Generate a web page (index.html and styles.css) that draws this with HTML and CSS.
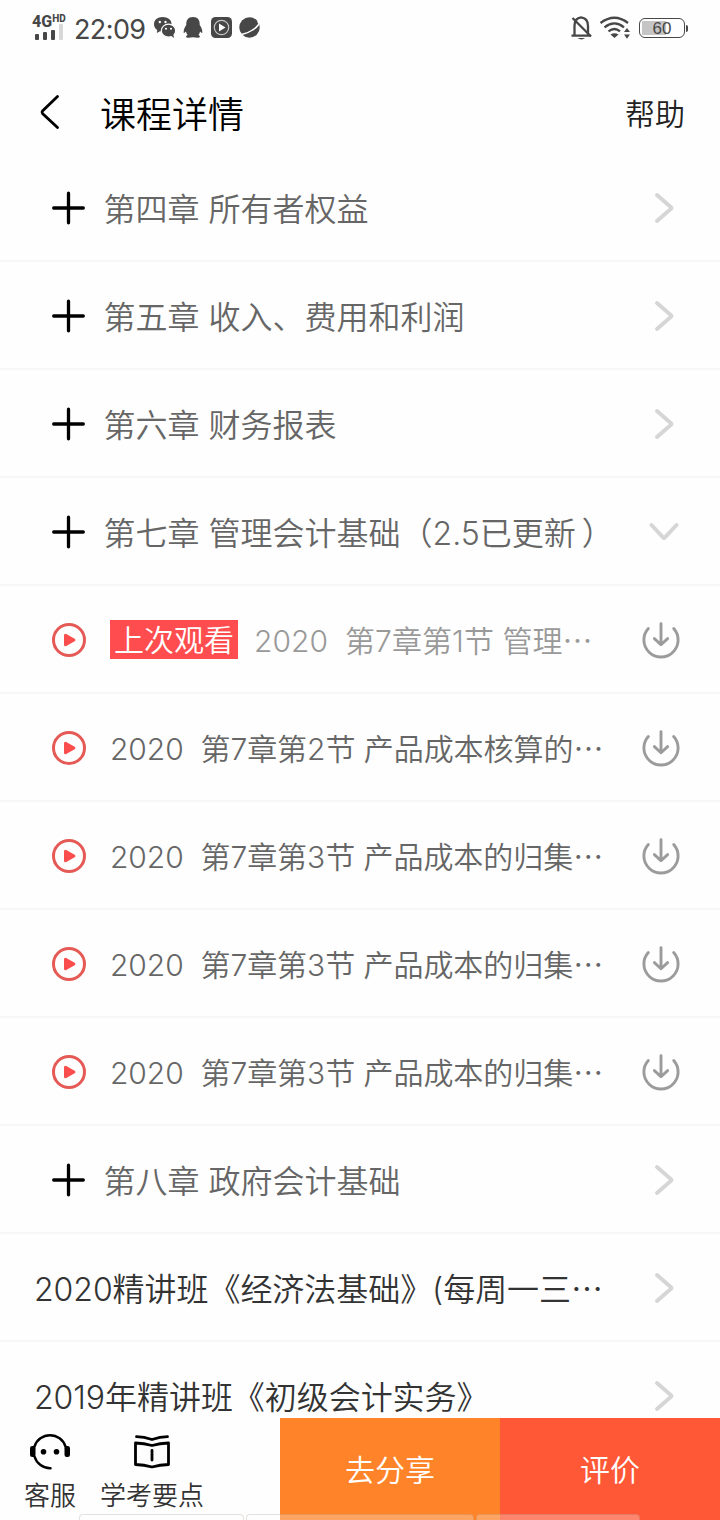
FILE: index.html
```html
<!DOCTYPE html>
<html lang="zh-CN">
<head>
<meta charset="utf-8">
<title>课程详情</title>
<link rel="stylesheet" href="styles.css">
</head>
<body>
<svg class="defs" aria-hidden="true">
  <symbol id="plus" viewBox="0 0 34 34"><path d="M17.500 2.200V31.800M2.700 17H32.300" fill="none" stroke="#000" stroke-width="3.300" stroke-linecap="round"/></symbol>
  <symbol id="right" viewBox="0 0 36 36"><path d="M11 5L25 17.200Q26 18 25 18.800L11 31" fill="none" stroke="#d6d6d6" stroke-width="4" stroke-linecap="round"/></symbol>
  <symbol id="down" viewBox="0 0 36 36"><path d="M5.500 11L17 23.300Q18 24.300 19 23.300L30.500 11" fill="none" stroke="#d6d6d6" stroke-width="4" stroke-linecap="round"/></symbol>
  <symbol id="play" viewBox="0 0 36 36"><circle cx="18" cy="18" r="15.500" fill="none" stroke="#e65a56" stroke-width="3"/><path d="M14.500 13.200V22.800L22.900 18Z" fill="#fc4d4d" stroke="#fc4d4d" stroke-width="3" stroke-linejoin="round"/></symbol>
  <symbol id="load" viewBox="0 0 40 40"><path d="M7.300 8.500A17.100 17.100 0 1 0 32.700 8.500M20 3.700V24.500M13.400 18.600L20 24.800L26.600 18.600" fill="none" stroke="#9b9b9b" stroke-width="2.900" stroke-linecap="round" stroke-linejoin="round"/></symbol>
</svg>
<div class="screen">
  <header class="status">
    <div class="network">
      <div class="network-name">4G<span class="hd">HD</span></div>
      <div class="bars"><i class="bar b1"></i><i class="bar b2"></i><i class="bar b3"></i><i class="bar b4"></i></div>
    </div>
    <span class="time">22:09</span>
    <svg class="apps" viewBox="0 0 108 24">
      <g fill="#474747">
        <path d="M8.500 1C3.500 1 0 4 0 8.300C0 10.800 1.200 12.800 3.300 14.100L2.800 17L6 15.300L9 15.600C14 15.600 17.600 12.400 17.600 8.200C17.600 4 14 1 8.500 1Z"/>
        <ellipse cx="14.500" cy="14.700" rx="7.200" ry="6.500" stroke="#fefefe" stroke-width="1.200"/><path d="M16 19L20 22L19 17Z"/>
        <path d="M39 1C34 1 32 4.500 32.300 9C31 11 29.300 13.500 29.700 17C30.200 17 31.200 16.300 32 15.500C32.300 17 32.900 18 33.600 18.900C30.500 21 32 22.500 39 21.300C46 22.500 47.500 21 44.500 18.900C45.200 18 45.800 17 46 15.500C46.800 16.300 47.800 17 48.300 17C48.700 13.500 47 11 45.700 9C46 4.500 44 1 39 1Z"/>
        <rect x="57" y="1" width="21" height="21" rx="4.500"/>
        <circle cx="95.500" cy="11.500" r="10.200"/>
      </g>
      <g fill="#fff"><circle cx="5.800" cy="6" r="1.200"/><circle cx="11.500" cy="6" r="1.200"/><circle cx="12" cy="12.800" r="1.050"/><circle cx="17" cy="12.800" r="1.050"/><path d="M65 7.500V15.500L71.500 11.500Z"/></g>
      <circle cx="67.500" cy="11.500" r="7.200" fill="none" stroke="#c5c5c5" stroke-width="1.200"/>
      <path d="M86 16C84 20 92.500 18 98.500 14C103.500 11 107 6.500 103.500 5.700" fill="none" stroke="#fff" stroke-width="1.500"/>
    </svg>
    <svg class="signals" viewBox="0 0 62 28">
      <g fill="none" stroke="#474747" stroke-width="2.300">
        <path d="M4.500 21.500V12Q4.500 4 11 3.300Q18 4 18 12V21.500M1.500 21.700H20.500" /><path d="M2.500 4L21 22.500"/>
        <path d="M30.500 9Q44.500 -1.500 58 9M34.500 13.300Q44.500 5.500 54 13.300M38.500 17.300Q44.500 12.800 50 17.300"/>
      </g>
      <path d="M7.500 24H15Q11.500 26.800 7.500 24ZM40.500 20.500Q44.500 18 48.500 20.500L44.500 24ZM54 18L57 14L60 18ZM54 20.500L57 24.800L60 20.500Z" fill="#474747"/>
    </svg>
    <div class="battery"><span class="charge">60</span></div><i class="battery-tip"></i>
  </header>

  <nav class="topbar">
    <svg class="back" viewBox="0 0 24 40"><path d="M19.500 5.500L4.500 20Q3.500 21.200 4.500 22.500L19.500 36.500" fill="none" stroke="#000" stroke-width="2.800" stroke-linecap="round"/></svg>
    <h1 class="title">课程详情</h1><span class="help">帮助</span>
  </nav>

  <main class="list">
    <div class="row chapter"><svg class="plus"><use href="#plus"/></svg><span class="name">第四章 所有者权益</span><svg class="chevron"><use href="#right"/></svg></div>
    <div class="row chapter"><svg class="plus"><use href="#plus"/></svg><span class="name">第五章 收入、费用和利润</span><svg class="chevron"><use href="#right"/></svg></div>
    <div class="row chapter"><svg class="plus"><use href="#plus"/></svg><span class="name">第六章 财务报表</span><svg class="chevron"><use href="#right"/></svg></div>
    <div class="row chapter"><svg class="plus"><use href="#plus"/></svg><span class="name">第七章 管理会计基础（2.5已更新<span class="close">）</span></span><svg class="chevron"><use href="#down"/></svg></div>
    <div class="row lesson watched"><svg class="play"><use href="#play"/></svg><span class="tag">上次观看</span><span class="name">2020  第7章第1节 管理<span class="dots">…</span></span><svg class="load"><use href="#load"/></svg></div>
    <div class="row lesson"><svg class="play"><use href="#play"/></svg><span class="name">2020  第7章第2节 产品成本核算的<span class="dots">…</span></span><svg class="load"><use href="#load"/></svg></div>
    <div class="row lesson"><svg class="play"><use href="#play"/></svg><span class="name">2020  第7章第3节 产品成本的归集<span class="dots">…</span></span><svg class="load"><use href="#load"/></svg></div>
    <div class="row lesson"><svg class="play"><use href="#play"/></svg><span class="name">2020  第7章第3节 产品成本的归集<span class="dots">…</span></span><svg class="load"><use href="#load"/></svg></div>
    <div class="row lesson"><svg class="play"><use href="#play"/></svg><span class="name">2020  第7章第3节 产品成本的归集<span class="dots">…</span></span><svg class="load"><use href="#load"/></svg></div>
    <div class="row chapter"><svg class="plus"><use href="#plus"/></svg><span class="name">第八章 政府会计基础</span><svg class="chevron"><use href="#right"/></svg></div>
    <div class="row course"><span class="name">2020精讲班《经济法基础》(每周一三<span class="dots">…</span></span><svg class="chevron"><use href="#right"/></svg></div>
    <div class="row course"><span class="name">2019年精讲班《初级会计实务》</span><svg class="chevron"><use href="#right"/></svg></div>
  </main>

  <footer class="actions">
    <div class="shortcuts">
      <div class="shortcut service">
        <svg class="shortcut-icon" viewBox="0 0 44 40"><path d="M6.500 15.500A16.300 16.300 0 0 1 37.500 15.500M6.500 25.500A16.300 16.300 0 0 0 22.500 37.200" fill="none" stroke="#000" stroke-width="2.500" stroke-linecap="round"/><rect x="2" y="15" width="5.500" height="11" rx="2.300"/><rect x="36.500" y="15" width="5.500" height="11" rx="2.300"/><circle cx="15.500" cy="20.800" r="2.800"/><circle cx="28.500" cy="20.800" r="2.800"/></svg>
        <span>客服</span>
      </div>
      <div class="shortcut points">
        <svg class="shortcut-icon" viewBox="0 0 44 40"><path d="M6.500 5.700Q14 5.800 22 8.500Q30 5.800 37.500 5.700M22 19.500V29M5.500 12Q14 12.300 22 14.500Q30 12.300 38.500 12V33.500Q30 33.800 22 36Q14 33.800 5.500 33.500Z" fill="none" stroke="#000" stroke-width="2.800" stroke-linecap="round" stroke-linejoin="round"/></svg>
        <span>学考要点</span>
      </div>
    </div>
    <div class="button share">去分享</div>
    <div class="button review">评价</div>
    <div class="peek"><i class="p1"></i><i class="p2"></i><i class="p3"></i></div>
  </footer>
</div>
</body>
</html>
```
FILE: styles.css
```css
* { box-sizing: border-box; }
body { margin: 0; background: #fefefe; font-family: Inter, "Noto Sans CJK SC", sans-serif; font-weight: 350; }
.defs { position: absolute; width: 0; height: 0; }
.screen { display: flex; flex-direction: column; width: 720px; height: 1520px; overflow: hidden; }
svg { flex: none; }

.status { display: flex; align-items: center; flex: none; height: 56px; padding-left: 32px; color: #474747; }
.network { width: 42px; height: 27px; }
.network-name { height: 14px; font: 800 16px/14px Roboto, sans-serif; white-space: nowrap; display: flex; }
.hd { font-size: 10px; line-height: 8px; }
.bars { display: flex; align-items: flex-end; gap: 4px; height: 11px; padding-left: 3px; }
.bar { width: 4px; border-radius: 1px; background: #474747; }
.b1 { height: 6px; }
.b2 { height: 8px; }
.b3 { height: 10px; }
.b4 { height: 16px; background: #d8d8d8; }
.time { width: 80px; font: 400 27px/32px Inter, sans-serif; letter-spacing: -.6px; white-space: nowrap; padding-top: 3px; }
.apps { width: 108px; height: 24px; }
.signals { width: 62px; height: 28px; margin-left: 308px; }
.battery { width: 46px; height: 20px; margin-left: 7px; border: 1.500px solid #474747; border-radius: 6px; padding: 2px; background: linear-gradient(#c5c5c5, #c5c5c5) 2px 2px / 24px 14px no-repeat; }
.charge { display: block; font: 400 17px/15px "Liberation Sans", sans-serif; text-align: center; }
.battery-tip { width: 2px; height: 7px; background: #474747; border-radius: 0 2px 2px 0; margin-left: 1px; }

.topbar { display: flex; align-items: center; flex: none; height: 98px; padding: 14px 35px 0 38px; color: #000; }
.back { width: 24px; height: 40px; margin-top: -3px; }
.title { margin: 0 0 0 38px; padding-top: 5px; font-size: 36px; line-height: 44px; font-weight: 350; }
.help { margin-left: auto; margin-top: -1px; font-size: 30px; color: #222; }

.list { flex: 1; min-height: 0; overflow: hidden; }
.row { display: flex; align-items: center; height: 108px; border-bottom: 2px solid #f7f7f7; white-space: pre; padding: 1px 38px 0 51px; }
.name { margin-top: -1px; }
.chapter { font-size: 32px; color: #666; }
.plus { width: 34px; height: 34px; margin-right: 18.5px; }
.chevron { width: 36px; height: 36px; margin-left: auto; }
.close { margin-left: 6px; }
.lesson { padding-right: 39px; font-size: 30px; letter-spacing: -.05px; color: #666; }
.play { width: 36px; height: 36px; margin-right: 23px; }
.load { width: 40px; height: 40px; margin-left: auto; }
.tag { width: 128px; height: 39px; line-height: 41px; margin: -1px 16px 0 0; background: #ff4d4f; color: #fff; text-align: center; }
.watched .name { color: #999; letter-spacing: .05px; }
.dots { font-family: "Noto Sans CJK SC", sans-serif; }
.course { padding-left: 34px; font-size: 32px; letter-spacing: -.05px; color: #333; }

.actions { position: relative; display: flex; flex: none; height: 102px; background: #fefefe; }
.shortcuts { display: flex; width: 280px; padding: 13px 0 0 24px; gap: 24px; }
.shortcut { display: flex; flex-direction: column; align-items: center; font-size: 26px; line-height: 34px; color: #333; }
.shortcut-icon { width: 44px; height: 40px; margin-bottom: 8px; }
.button { width: 220px; line-height: 105px; text-align: center; font-size: 30px; color: #fff; }
.share { background: #ff8328; }
.review { background: #ff5837; }
.peek { position: absolute; left: 79px; bottom: 0; display: flex; gap: 2px; height: 6px; }
.peek i { border: solid rgba(80, 50, 30, .14); border-width: 1px 1px 0; border-radius: 4px 4px 0 0; background: rgba(255, 255, 255, .28); }
.p1 { width: 165px; }
.p2 { width: 228px; }
.p3 { width: 164px; }
```
